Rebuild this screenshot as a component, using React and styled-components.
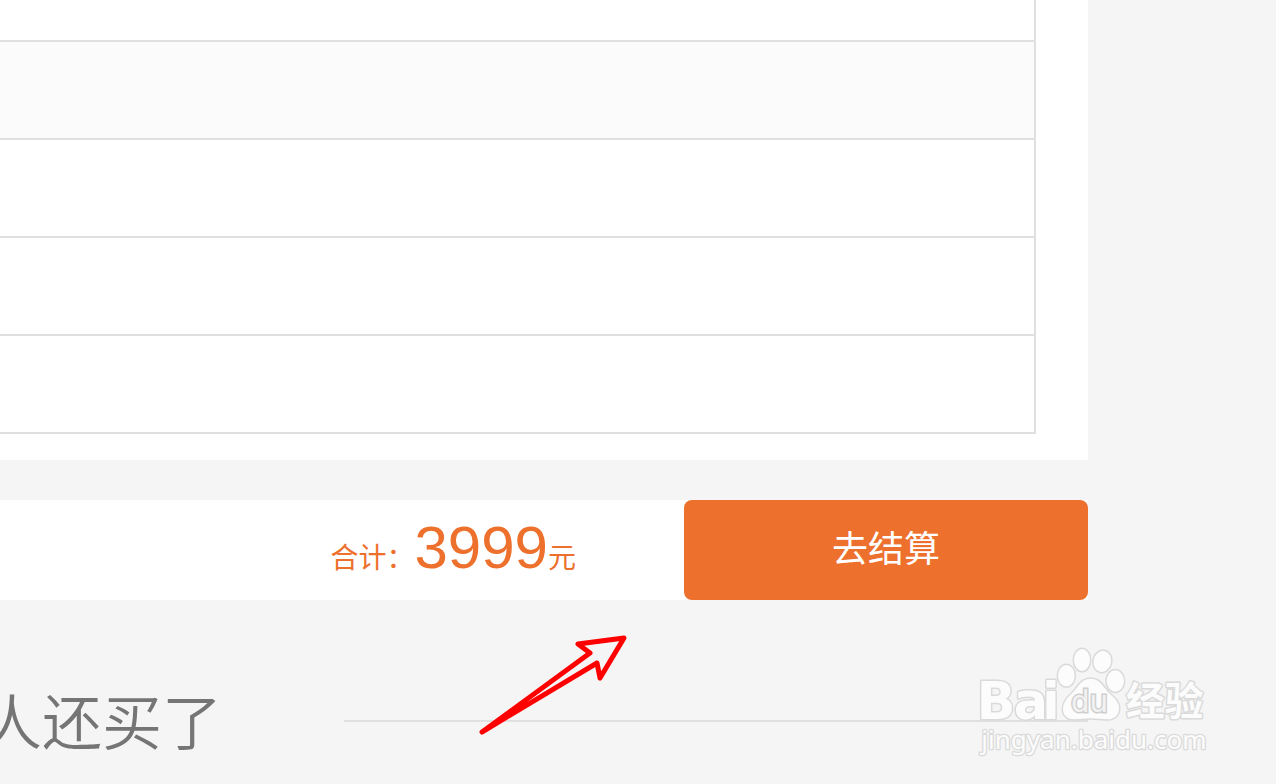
import React from "react";
import styled, { createGlobalStyle } from "styled-components";

const GlobalStyle = createGlobalStyle`
  * { box-sizing: border-box; }
  body {
    margin: 0;
    background: #f5f5f5;
    font-family: "Liberation Sans", "Noto Sans CJK SC", sans-serif;
  }
`;

const Page = styled.main`
  position: relative;
  min-height: 100vh;
  padding-right: 188px;
  overflow: hidden;
`;

const Card = styled.section`
  padding: 0 52px 26px 0;
  background: #fff;
`;

const OptionList = styled.div`
  border-right: 2px solid #e0e0e0;
`;

const OptionRow = styled.div`
  height: ${(p) => (p.$partial ? 42 : 98)}px;
  border-bottom: 2px solid #e0e0e0;
  background: ${(p) => (p.$shaded ? "#fbfbfb" : "#fff")};
`;

const CheckoutBar = styled.section`
  display: flex;
  justify-content: flex-end;
  gap: 108px;
  height: 100px;
  margin-top: 40px;
  background: #fff;
`;

const Total = styled.p`
  margin: 0;
  color: #ed702d;
  font-size: 28px;
  line-height: 96px;
  white-space: nowrap;
`;

const Amount = styled.span`
  font-size: 60px;
`;

const CheckoutButton = styled.button`
  width: 404px;
  border: 0;
  border-radius: 8px;
  padding: 0 0 8px;
  background: #ed702d;
  color: #fff;
  font-family: inherit;
  font-size: 36px;
  cursor: pointer;
`;

const AlsoBought = styled.section`
  display: flex;
  align-items: center;
  gap: 122px;
  margin: 76px 0 0 -18px;
`;

const Heading = styled.h2`
  margin: 0;
  padding-bottom: 4px;
  color: #757575;
  font-family: "Noto Sans CJK SC", sans-serif;
  font-size: 60px;
  font-weight: 350;
  line-height: 86px;
  white-space: nowrap;
`;

const Rule = styled.div`
  flex: 1;
  height: 2px;
  background: #e0e0e0;
`;

const Arrow = styled.svg`
  position: absolute;
  left: 470px;
  top: 620px;
`;

const Watermark = styled.svg`
  position: absolute;
  right: 56px;
  top: 640px;
`;

const rows = [
  { id: 1, partial: true },
  { id: 2, shaded: true },
  { id: 3 },
  { id: 4 },
  { id: 5 },
];

function BaiduMark() {
  return (
    <Watermark width="250" height="130" viewBox="0 0 750 390" aria-label="Baidu 经验">
      <g
        fill="#fcfcfc"
        stroke="#dadada"
        strokeWidth="9"
        strokeLinejoin="round"
        paintOrder="stroke"
      >
        <ellipse cx="289" cy="107" rx="25" ry="32" />
        <ellipse cx="336" cy="60" rx="24" ry="33" />
        <ellipse cx="397" cy="64" rx="26" ry="32" transform="rotate(12 397 64)" />
        <ellipse cx="436" cy="123" rx="26" ry="32" />
        <text x="20 131 217" y="236" fontFamily="DejaVu Sans, sans-serif" fontWeight="700" fontSize="152">Bai</text>
        <path d="M362 116C340 116 328 132 317 148C305 164 279 178 279 208C279 228 294 238 312 238C331 238 345 235 362 235C380 235 395 238 414 238C434 238 447 225 447 204C447 178 419 166 407 148C396 132 384 116 362 116Z" />
        <text x="468" y="224" fontFamily="Noto Sans CJK SC, sans-serif" fontWeight="700" fontSize="116">经验</text>
        <text x="34" y="327" fontFamily="Noto Sans, sans-serif" fontWeight="400" fontSize="78" strokeWidth="8">jingyan.baidu.com</text>
      </g>
      <text x="303" y="217" fontFamily="DejaVu Sans, sans-serif" fontSize="88" fill="#f2f2f2" stroke="#cfcfcf" strokeWidth="9" paintOrder="stroke">du</text>
    </Watermark>
  );
}

export default function App() {
  return (
    <>
      <GlobalStyle />
      <Page>
        <Card>
          <OptionList>
            {rows.map((r) => (
              <OptionRow key={r.id} $partial={r.partial} $shaded={r.shaded} />
            ))}
          </OptionList>
        </Card>
        <CheckoutBar>
          <Total>
            合计：<Amount>3999</Amount>元
          </Total>
          <CheckoutButton type="button">去结算</CheckoutButton>
        </CheckoutBar>
        <AlsoBought>
          <Heading>人还买了</Heading>
          <Rule />
        </AlsoBought>
        <Arrow width="170" height="120" viewBox="0 0 170 120" aria-hidden="true">
          <path
            d="M12 112L120 33L108 24L154 18L130 58L127 43Z"
            fill="none"
            stroke="#ff0000"
            strokeWidth="5"
            strokeLinejoin="round"
          />
        </Arrow>
        <BaiduMark />
      </Page>
    </>
  );
}
